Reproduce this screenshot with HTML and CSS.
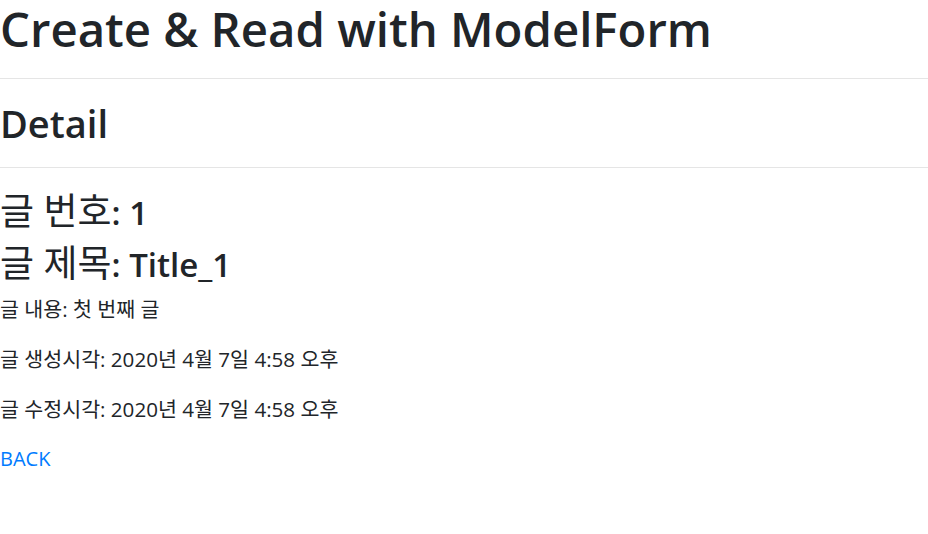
FILE: index.html
```html
<!DOCTYPE html>
<html lang="ko">
<head>
<meta charset="utf-8">
<title>Detail</title>
<link rel="stylesheet" href="styles.css">
</head>
<body>
<h1 class="title">Create &amp; Read with ModelForm</h1>
<hr class="rule">
<h2 class="subtitle">Detail</h2>
<hr class="rule">
<h3 class="field"><span class="ko">글 번호</span>: 1</h3>
<h3 class="field"><span class="ko">글 제목</span>: Title_1</h3>
<p class="text">글 내용: 첫 번째 글</p>
<p class="text">글 생성시각: 2020년 4월 7일 4:58 오후</p>
<p class="text">글 수정시각: 2020년 4월 7일 4:58 오후</p>
<a class="back" href="#">BACK</a>
</body>
</html>
```

FILE: styles.css
```css
html, body {
  margin: 0;
  padding: 0;
  background: #fff;
}
body {
  font-family: "Open Sans", "Noto Sans CJK KR", sans-serif;
  font-size: 20px;
  line-height: 30px;
  color: #212529;
}
.title, .subtitle, .field {
  margin: 0 0 10px 0;
  font-weight: 600;
  color: #212529;
}
.title {
  font-size: 47.3px;
  line-height: 58px;
}
.subtitle {
  font-size: 38px;
  line-height: 48px;
}
.field {
  font-size: 33px;
  line-height: 42px;
  padding-top: 2px;
  height: 40px;
}
.ko {
  font-weight: 400;
  font-size: 1.12em;
}
.rule {
  margin: 20px 0;
  border: 0;
  border-top: 1px solid #e5e5e5;
  height: 0;
}
.text {
  margin: 0 0 20px 0;
  font-size: 20.6px;
  padding-top: 2px;
  height: 28px;
}
.back {
  display: inline-block;
  padding-top: 2px;
  color: #007bff;
  text-decoration: none;
}
```
